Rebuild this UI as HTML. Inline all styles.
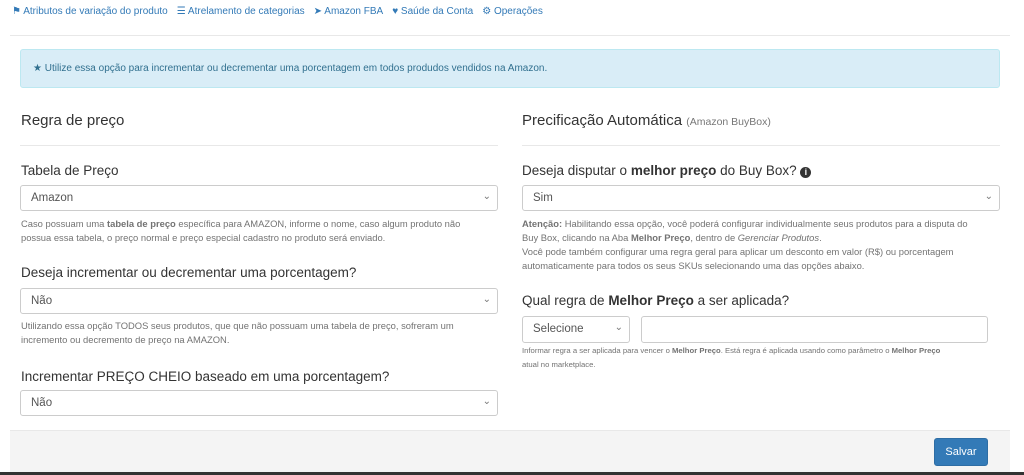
<!DOCTYPE html><html><head><meta charset="utf-8"><style>
body{margin:0;width:1024px;height:475px;background:#fff;font-family:"Liberation Sans",sans-serif;position:relative;overflow:hidden;color:#333}
.a{position:absolute;white-space:nowrap}
.nav{top:6px;left:12px;font-size:10px;color:#337ab7}
.nav span{margin-right:9px}
.hr{position:absolute;height:1px;background:#e8e8e8}
.sel{position:absolute;height:26px;border:1px solid #ccc;border-radius:3px;box-sizing:border-box;background:#fff;font-size:11.5px;line-height:25px;padding-left:10px;color:#555}
.sel:after{content:"⌄";position:absolute;right:6px;top:-2px;font-size:10px;color:#777}
.lab{font-size:13.5px;color:#333}
.h{font-size:15px;color:#333}
.help{font-size:9.4px;color:#737373;line-height:14px;white-space:normal}
</style></head><body>
<div class="a nav"><span>&#9873; Atributos de variação do produto</span><span>&#9776; Atrelamento de categorias</span><span>&#10148; Amazon FBA</span><span>&#9829; Saúde da Conta</span><span>&#9881; Operações</span></div>
<div class="hr" style="top:35px;left:10px;width:1000px"></div>
<div style="position:absolute;left:20px;top:49px;width:980px;height:39px;box-sizing:border-box;background:#d9edf7;border:1px solid #bce8f1;border-radius:3px;color:#31708f;font-size:10px;line-height:37px;padding-left:12px">★ Utilize essa opção para incrementar ou decrementar uma porcentagem em todos produdos vendidos na Amazon.</div>
<div class="a h" style="left:21px;top:112px">Regra de preço</div>
<div class="hr" style="top:145px;left:20px;width:478px"></div>
<div class="a lab" style="left:21px;top:163px">Tabela de Preço</div>
<div class="sel" style="left:20px;top:185px;width:478px">Amazon</div>
<div class="a help" style="left:21px;top:217px;width:470px">Caso possuam uma <b>tabela de preço</b> específica para AMAZON, informe o nome, caso algum produto não possua essa tabela, o preço normal e preço especial cadastro no produto será enviado.</div>
<div class="a lab" style="left:21px;top:265px">Deseja incrementar ou decrementar uma porcentagem?</div>
<div class="sel" style="left:20px;top:288px;width:478px">Não</div>
<div class="a help" style="left:21px;top:319px;width:470px">Utilizando essa opção TODOS seus produtos, que que não possuam uma tabela de preço, sofreram um incremento ou decremento de preço na AMAZON.</div>
<div class="a lab" style="left:21px;top:369px">Incrementar PREÇO CHEIO baseado em uma porcentagem?</div>
<div class="sel" style="left:20px;top:390px;width:478px">Não</div>
<div class="a h" style="left:522px;top:112px">Precificação Automática <span style="font-size:10.5px;color:#777">(Amazon BuyBox)</span></div>
<div class="hr" style="top:145px;left:522px;width:478px"></div>
<div class="a lab" style="left:522px;top:163px">Deseja disputar o <b>melhor preço</b> do Buy Box? <span style="display:inline-block;width:11px;height:11px;border-radius:50%;background:#333;color:#fff;font-size:9px;line-height:11px;text-align:center;font-weight:bold;vertical-align:0">i</span></div>
<div class="sel" style="left:522px;top:185px;width:478px">Sim</div>
<div class="a help" style="left:522px;top:217px;width:470px"><b>Atenção:</b> Habilitando essa opção, você poderá configurar individualmente seus produtos para a disputa do<br>Buy Box, clicando na Aba <b>Melhor Preço</b>, dentro de <i>Gerenciar Produtos</i>.<br>Você pode também configurar uma regra geral para aplicar um desconto em valor (R$) ou porcentagem automaticamente para todos os seus SKUs selecionando uma das opções abaixo.</div>
<div class="a lab" style="left:522px;top:293px">Qual regra de <b>Melhor Preço</b> a ser aplicada?</div>
<div class="sel" style="left:522px;top:316px;width:108px;height:27px">Selecione</div>
<div style="position:absolute;left:641px;top:316px;width:347px;height:27px;border:1px solid #ccc;border-radius:3px;box-sizing:border-box"></div>
<div class="a help" style="left:522px;top:344px;width:460px;font-size:7.7px">Informar regra a ser aplicada para vencer o <b>Melhor Preço</b>. Está regra é aplicada usando como parâmetro o <b>Melhor Preço</b><br>atual no marketplace.</div>
<div style="position:absolute;left:10px;top:430px;width:1000px;height:42px;background:#f4f4f4;border-top:1px solid #e8e8e8"></div>
<div style="position:absolute;left:934px;top:438px;width:54px;height:28px;background:#337ab7;border:1px solid #2e6da4;box-sizing:border-box;border-radius:3px;color:#fff;font-size:11px;line-height:26px;text-align:center">Salvar</div>
<div style="position:absolute;left:0;top:472px;width:1024px;height:3px;background:#333"></div>
</body></html>
